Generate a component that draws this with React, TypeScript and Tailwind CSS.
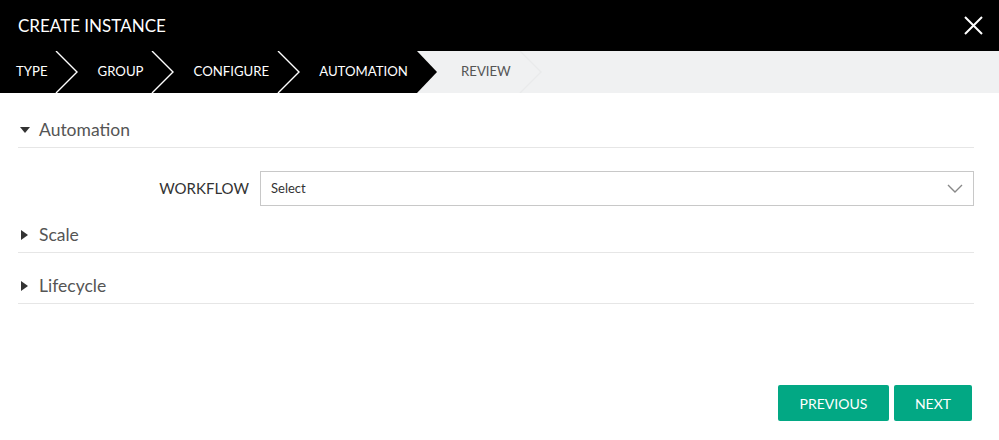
import React from "react";

const font = { fontFamily: "Lato, 'Noto Sans', sans-serif" };

const Chevron: React.FC<{ className?: string; color?: string }> = ({ className, color = "#ffffff" }) => (
  <svg width="24" height="42" viewBox="0 0 24 42" className={className}>
    <polyline points="1,0 22,21 1,42" fill="none" stroke={color} strokeWidth="1.4" />
  </svg>
);

const SectionHeader: React.FC<{ title: string; open?: boolean; className?: string }> = ({ title, open, className }) => (
  <div className={`flex h-[35px] items-center border-b border-[#e6e6e6] ${className ?? ""}`}>
    <svg width="12" height="12" viewBox="0 0 12 12" className="ml-[1px] mr-[8px]">
      {open ? <polygon points="1,3 11,3 6,9" fill="#333" /> : <polygon points="2,1 9,6 2,11" fill="#333" />}
    </svg>
    <span className="text-[17.5px] text-[#555]">{title}</span>
  </div>
);

export default function App() {
  return (
    <div className="flex h-[440px] w-[999px] flex-col bg-white" style={font}>
      {/* title bar */}
      <div className="flex h-[51px] items-center justify-between bg-black pl-[18px] pr-[16px]">
        <span className="text-[17px] text-white">CREATE INSTANCE</span>
        <svg width="19" height="19" viewBox="0 0 19 19">
          <path d="M1 1 L18 18 M18 1 L1 18" stroke="#fff" strokeWidth="2" />
        </svg>
      </div>

      {/* wizard steps */}
      <div className="flex h-[42px] items-center bg-[#f0f1f2] text-[13.2px]">
        <div className="flex h-full w-[417px] items-center bg-black pl-[16px] text-white">
          <span>TYPE</span>
          <Chevron className="ml-[7px]" />
          <span className="ml-[19px]">GROUP</span>
          <Chevron className="ml-[7px]" />
          <span className="ml-[19px]">CONFIGURE</span>
          <Chevron className="ml-[8px]" />
          <span className="ml-[18px]">AUTOMATION</span>
        </div>
        <svg width="21" height="42" viewBox="0 0 21 42">
          <polygon points="0,0 20,21 0,42" fill="#000" />
        </svg>
        <span className="ml-[23px] text-[#555]">REVIEW</span>
        <Chevron className="ml-[8px]" color="#e9eaeb" />
      </div>

      {/* content */}
      <div className="flex flex-1 flex-col pl-[18px] pr-[25px] pt-[20px]">
        <SectionHeader title="Automation" open />
        <div className="mt-[23px] flex items-center">
          <label className="w-[231px] text-right text-[15px] text-[#333]">WORKFLOW</label>
          <div className="ml-[11px] flex h-[35px] flex-1 items-center justify-between border border-[#c8c8c8] pl-[10px] pr-[10px]">
            <span className="text-[13px] text-[#333]">Select</span>
            <svg width="16" height="9" viewBox="0 0 16 9">
              <polyline points="1,1 8,8 15,1" fill="none" stroke="#888" strokeWidth="1.4" />
            </svg>
          </div>
        </div>
        <SectionHeader title="Scale" className="mt-[12px]" />
        <SectionHeader title="Lifecycle" className="mt-[16px]" />
      </div>

      {/* actions */}
      <div className="flex justify-end gap-[5px] pb-[19px] pr-[27px]">
        <button className="h-[36px] w-[111px] rounded-[2px] bg-[#02a884] text-[14px] text-white">PREVIOUS</button>
        <button className="h-[36px] w-[78px] rounded-[2px] bg-[#02a884] text-[14px] text-white">NEXT</button>
      </div>
    </div>
  );
}
